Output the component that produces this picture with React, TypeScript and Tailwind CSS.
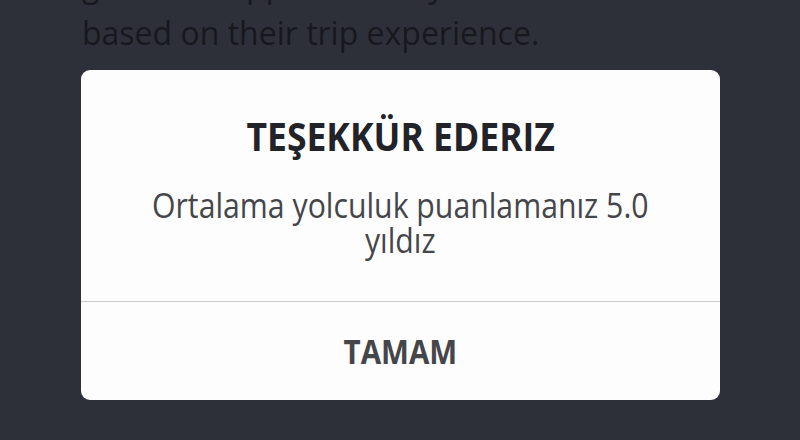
export default function App() {
  return (
    <div
      className="w-[800px] h-[440px] overflow-hidden bg-[#2e3039]"
      style={{ fontFamily: "'Open Sans', 'Noto Sans', sans-serif" }}
    >
      {/* body copy behind the dialog */}
      <div className="pl-[82px] -mt-[39px] text-[32px] leading-[48px] text-[#17181e]">
        <p>give their app a score by</p>
        <p>based on their trip experience.</p>
      </div>

      {/* dialog */}
      <div className="ml-[81px] mt-[13px] w-[639px] h-[330px] rounded-[9px] bg-[#fdfdfd] flex flex-col overflow-hidden">
        <div className="h-[231px] pt-[42px] flex flex-col items-center text-center">
          <h2 className="text-[40px] leading-[48px] font-bold text-[#222328] scale-x-[0.888]">
            TEŞEKKÜR EDERIZ
          </h2>
          <p className="mt-[28px] text-[34px] leading-[35px] text-[#45464a] scale-x-[0.889]">
            Ortalama yolculuk puanlamanız 5.0
            <br />
            yıldız
          </p>
        </div>
        <div className="h-[1px] bg-[#c9c9c9]" />
        <button className="flex-1 flex items-center justify-center">
          <span className="text-[34px] font-bold text-[#45464a] scale-x-[0.87]">TAMAM</span>
        </button>
      </div>
    </div>
  );
}
